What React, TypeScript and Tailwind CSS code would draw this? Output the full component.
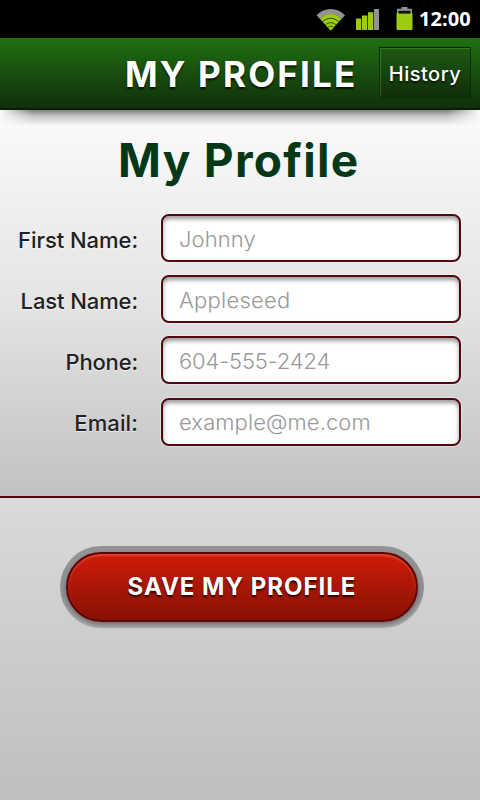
import React from 'react';

interface Field {
  id: string;
  label: string;
  placeholder: string;
  labelClass: string;
  inputClass: string;
}

const fields: Field[] = [
  {
    id: 'firstName',
    label: 'First Name:',
    placeholder: 'Johnny',
    labelClass: 'tracking-[-0.05px]',
    inputClass: 'tracking-[0.1px]',
  },
  {
    id: 'lastName',
    label: 'Last Name:',
    placeholder: 'Appleseed',
    labelClass: 'tracking-[-0.1px]',
    inputClass: 'tracking-[0.25px]',
  },
  {
    id: 'phone',
    label: 'Phone:',
    placeholder: '604-555-2424',
    labelClass: 'tracking-[-0.15px]',
    inputClass: 'tracking-[-0.15px]',
  },
  {
    id: 'email',
    label: 'Email:',
    placeholder: 'example@me.com',
    labelClass: 'tracking-[0.1px]',
    inputClass: 'tracking-[0.1px]',
  },
];

const WifiIcon = () => (
  <svg width="30" height="24" viewBox="0 0 30 24">
    <path d="M0.5 7.2C8.5 -1.2 21 -1.2 29 7.2L25.5 11C19 4.6 10.5 4.6 4 11Z" fill="#929292" />
    <path d="M4 10.8C10.5 4.4 19 4.4 25.5 10.8L16 21.4C15.1 22.5 14.4 22.5 13.5 21.4Z" fill="#9ccb10" />
    <path
      d="M6.8 13.6C11.6 9.2 17.9 9.2 22.7 13.6M9.6 16.8C12.7 14 16.8 14 19.9 16.8"
      fill="none"
      stroke="#2c4200"
      strokeWidth="1"
    />
    <path d="M12 19.2C13.8 17.8 15.7 17.8 17.5 19.2" fill="none" stroke="#2c4200" strokeWidth="0.8" />
  </svg>
);

const SignalIcon = () => (
  <svg width="24" height="22" viewBox="0 0 24 22">
    <rect x="0" y="9.5" width="5.3" height="11.5" fill="#9ccb10" />
    <rect x="6" y="6.5" width="5.3" height="14.5" fill="#9ccb10" />
    <rect x="12" y="3.2" width="5.3" height="17.8" fill="#9ccb10" />
    <rect x="18" y="0" width="5" height="21" fill="#929292" />
  </svg>
);

const BatteryIcon = () => (
  <svg width="17" height="24" viewBox="0 0 17 24">
    <path d="M5.5 0H11.5V1.8H16V8H1V1.8H5.5Z" fill="#929292" />
    <rect x="0.5" y="6" width="16" height="17" rx="0.8" fill="#9ccb10" />
    <rect x="2.5" y="3.8" width="12" height="2.8" fill="#111" />
  </svg>
);

const StatusBar = () => (
  <div className="flex h-[38px] items-center bg-black pl-[316px]">
    <div className="mt-[1px] h-6 w-10">
      <WifiIcon />
    </div>
    <div className="mt-[1px] h-[22px] w-10">
      <SignalIcon />
    </div>
    <div className="h-6 w-[23px]">
      <BatteryIcon />
    </div>
    <span className="font-['Noto_Sans'] text-[20px] leading-none font-bold tracking-[0.1px] text-white">
      12:00
    </span>
  </div>
);

const Header = () => (
  <header className="relative z-10 flex h-[72px] items-center border-b-2 border-[#091f05] bg-linear-to-b from-[#207012] to-[#10300a] pr-[9px]">
    <span className="mt-[3px] ml-[125px] w-[254px] text-[35px] leading-none font-bold tracking-[2.2px] whitespace-nowrap text-white [text-shadow:0_2px_2px_rgba(0,0,0,0.75)]">
      MY PROFILE
    </span>
    <button className="mt-[-1px] h-[51px] w-[92px] border border-[#0b2d06] bg-linear-to-b from-[#1d5b12] to-[#102f09] pt-[2px] text-[20px] font-medium tracking-[0.5px] text-white shadow-[inset_1px_1px_0_rgba(80,160,60,0.45)] [text-shadow:0_2px_2px_rgba(0,0,0,0.7)]">
      History
    </button>
  </header>
);

const App: React.FC = () => {
  return (
    <div className="flex h-[800px] w-[480px] flex-col overflow-hidden font-['Inter',sans-serif]">
      <StatusBar />
      <Header />

      <main className="relative h-[388px] border-b-2 border-[#520811] bg-linear-to-b from-[#fbfbfb] via-[#e4e4e4] via-50% to-[#c3c1c2]">
        {/* Shadow cast by the header, fading out at both ends */}
        <div className="absolute inset-x-0 top-0 h-4 bg-linear-to-b from-black/50 via-black/20 via-40% to-transparent [mask-image:linear-gradient(to_right,transparent,black_7%,black_93%,transparent)]" />

        <h1 className="pt-[22px] pl-[118px] text-[46px] leading-[56px] font-bold tracking-[1.3px] whitespace-nowrap text-[#053819]">
          My Profile
        </h1>

        <form className="mt-[26px] flex flex-col gap-[13.2px]">
          {fields.map(field => (
            <div key={field.id} className="flex h-12 items-center">
              <label
                htmlFor={field.id}
                className={`w-[138px] pt-1 text-right text-[22px] font-medium whitespace-nowrap text-[#222] [text-shadow:0_1px_1px_rgba(255,255,255,0.7)] ${field.labelClass}`}
              >
                {field.label}
              </label>
              <input
                id={field.id}
                placeholder={field.placeholder}
                className={`ml-[23px] h-12 w-[300px] rounded-[8px] border-2 border-[#520811] bg-white px-4 pt-[1px] text-[22px] font-light placeholder:text-[#999] shadow-[inset_0_3px_4px_rgba(0,0,0,0.4),0_0_1px_1px_rgba(255,255,255,0.4)] ${field.inputClass}`}
              />
            </div>
          ))}
        </form>
      </main>

      <footer className="flex-1 bg-linear-to-b from-[#dadada] to-[#bfbfbf] pt-[48px] pl-[60px]">
        <div className="h-[82px] w-[364px] rounded-full bg-linear-to-b from-[#929395] from-60% to-[#b0b0b0] p-[6px]">
          <button className="h-[70px] w-[352px] rounded-full border-2 border-[#600305] bg-linear-to-b from-[#d01c08] to-[#861105] text-[24px] font-bold tracking-[1px] whitespace-nowrap text-white shadow-[inset_0_2px_2px_rgba(255,150,130,0.35),0_3px_5px_rgba(0,0,0,0.35)] [text-shadow:0_2px_2px_rgba(0,0,0,0.75)]">
            SAVE MY PROFILE
          </button>
        </div>
      </footer>
    </div>
  );
};

export default App;
